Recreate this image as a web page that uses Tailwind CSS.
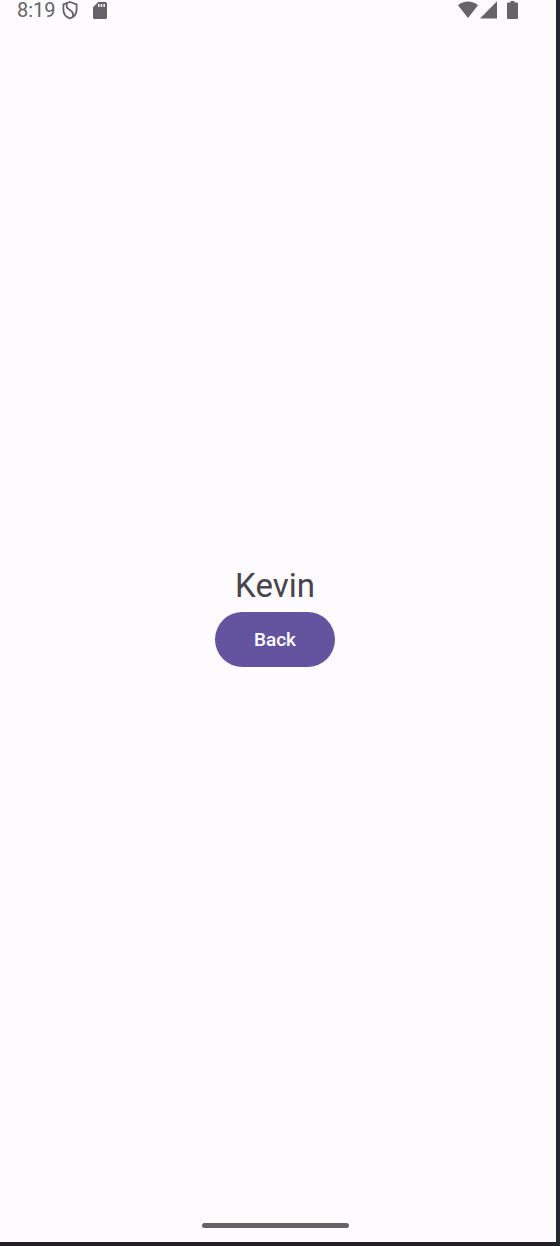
<!DOCTYPE html>
<html lang="en">
<head>
<meta charset="utf-8">
<title>Kevin</title>
<script src="https://cdn.jsdelivr.net/npm/@tailwindcss/browser@4"></script>
</head>
<body class="bg-[#fefbff] font-['Roboto',sans-serif]">
<div class="flex min-h-screen flex-col border-r-4 border-b-4 border-r-[#25282d] border-b-[#232126] bg-[#fefbff]">
  <header class="flex h-5 items-center justify-between pr-[38px] pl-[17px] text-[#656368]">
    <div class="flex items-center">
      <time class="text-[20px] leading-5">8:19</time>
      <svg class="ml-1.5 h-5 w-4" viewBox="0 0 16 20" fill="none" stroke="currentColor" stroke-width="1.8" aria-hidden="true">
        <path d="M8 2 14.6 4.3V9.5C14.6 13.8 11.8 17.1 8 18.4 4.2 17.1 1.4 13.8 1.4 9.5V4.3Z"/>
        <path d="M4.8 3.4C3.8 6.8 5.2 8.4 7.6 9.8 10.8 11.8 12 13.5 10.8 16.5"/>
      </svg>
      <svg class="ml-[14px] h-5 w-4" viewBox="0 0 16 20" aria-hidden="true">
        <path fill="currentColor" fill-rule="evenodd" d="M6.2 2H13.4Q15 2 15 3.6V17.4Q15 19 13.4 19H2.6Q1 19 1 17.4V7.2ZM6 4V7H7.5V4ZM8.7 4V7H10.2V4ZM11.4 4V7H12.9V4Z"/>
      </svg>
    </div>
    <div class="flex items-center">
      <svg class="h-5 w-5" viewBox="0 0 20 20" fill="currentColor" aria-hidden="true"><path d="M0 5.2C5.8 .3 14.2 .3 20 5.2L10 18Z"/></svg>
      <svg class="ml-0.5 h-5 w-[17px]" viewBox="0 0 17 20" fill="currentColor" aria-hidden="true"><path d="M17 1.2V18.5H0Z"/></svg>
      <svg class="ml-[10px] h-5 w-[11px]" viewBox="0 0 11 20" fill="currentColor" aria-hidden="true"><path d="M3.5 1H7.5V2.4H10Q11 2.4 11 3.4V18Q11 19 10 19H1Q0 19 0 18V3.4Q0 2.4 1 2.4H3.5Z"/></svg>
    </div>
  </header>
  <main class="flex grow flex-col items-center justify-center pr-[6px] pb-3">
    <h1 class="text-[33px] leading-[44px] text-[#49454e]">Kevin</h1>
    <button type="button" class="mt-1 h-[55px] rounded-full bg-[#64539e] px-[39px] text-[19px] leading-7 font-medium text-white">Back</button>
  </main>
  <footer class="flex justify-center pr-[6px] pb-[14px]">
    <div class="h-[5px] w-[147px] rounded-full bg-[#656368]"></div>
  </footer>
</div>
</body>
</html>
